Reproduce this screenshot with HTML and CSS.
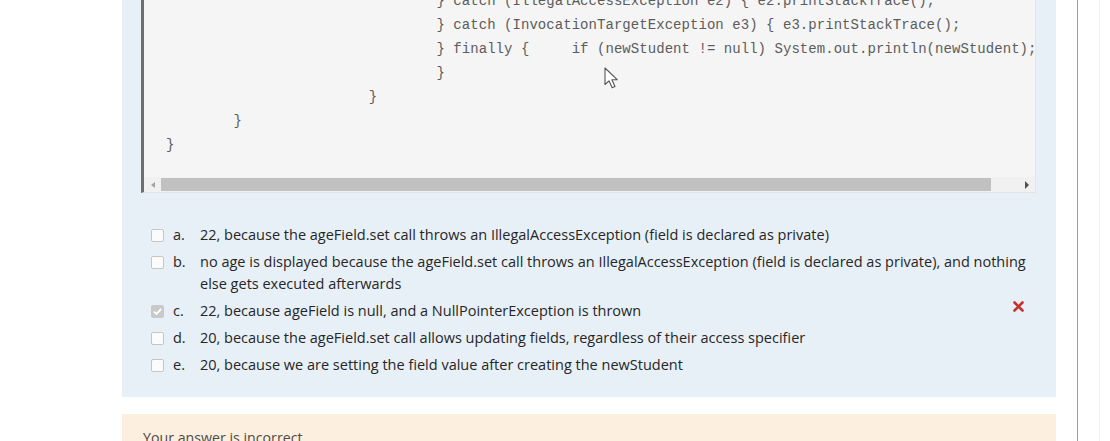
FILE: index.html
```html
<!DOCTYPE html>
<html lang="en">
<head>
<meta charset="utf-8">
<title>Question</title>
<link rel="stylesheet" href="styles.css">
</head>
<body>
<div class="page">
  <div class="question">
    <div class="formulation">
      <div class="code">
        <pre class="code-view"><div class="code-lines">                                } catch (IllegalAccessException e2) { e2.printStackTrace();
                                } catch (InvocationTargetException e3) { e3.printStackTrace();
                                } finally {     if (newStudent != null) System.out.println(newStudent); }
                                }
                        }
        }
}</div></pre>
        <div class="hscroll">
          <span class="arrow arrow-left"></span>
          <span class="thumb"></span>
          <span class="track"></span>
          <span class="arrow arrow-right"></span>
        </div>
        <svg class="cursor" width="15" height="22" viewBox="0 0 15 22">
          <path d="M1 1 L1 17.5 L5 13.8 L8.2 20.8 L11 19.5 L7.9 12.7 L13.2 12.7 Z" fill="#fff" stroke="#555" stroke-width="1.1" stroke-linejoin="round"/>
        </svg>
      </div>
      <div class="answers">
        <div class="option">
          <span class="check"></span><span class="letter">a.</span>
          <span class="text">22, because the ageField.set call throws an IllegalAccessException (field is declared as private)</span>
        </div>
        <div class="option">
          <span class="check"></span><span class="letter">b.</span>
          <span class="text">no age is displayed because the ageField.set call throws an IllegalAccessException (field is declared as private), and nothing else gets executed afterwards</span>
        </div>
        <div class="option">
          <span class="check checked"><svg width="13" height="13" viewBox="0 0 13 13"><path d="M3 6.6 L5.5 9 L10.2 3.8" fill="none" stroke="#fff" stroke-width="1.8"/></svg></span><span class="letter">c.</span>
          <span class="text">22, because ageField is null, and a NullPointerException is thrown</span>
          <svg class="wrong" width="11" height="11" viewBox="0 0 11 11"><path d="M1.5 1.5 L9.5 9.5 M9.5 1.5 L1.5 9.5" stroke="#c8312b" stroke-width="2.6" stroke-linecap="round"/></svg>
        </div>
        <div class="option">
          <span class="check"></span><span class="letter">d.</span>
          <span class="text">20, because the ageField.set call allows updating fields, regardless of their access specifier</span>
        </div>
        <div class="option">
          <span class="check"></span><span class="letter">e.</span>
          <span class="text">20, because we are setting the field value after creating the newStudent</span>
        </div>
      </div>
    </div>
    <div class="outcome">Your answer is incorrect</div>
  </div>
  <div class="side"></div>
</div>
</body>
</html>
```

FILE: styles.css
```css
html, body {
  margin: 0;
  padding: 0;
  background: #ffffff;
  height: 441px;
  overflow: hidden;
}

.page {
  display: flex;
  padding-left: 122px;
  height: 441px;
  font-family: "Open Sans", "Noto Sans", sans-serif;
}

.question {
  width: 934px;
  display: flex;
  flex-direction: column;
}

.formulation {
  background: #e8f0f7;
  padding: 0 20px 16px 19px;
}

.code {
  position: relative;
  border-left: 3px solid #6e6e6e;
  border-bottom: 1px solid #e2e2e2;
  border-right: 1px solid #e6e6e6;
  background: #f5f5f5;
}

.code-view {
  margin: 0;
  height: 177px;
  overflow: hidden;
  padding: 0 0 0 22px;
  font-family: "Liberation Mono", "DejaVu Sans Mono", monospace;
  font-size: 14px;
  letter-spacing: 0.05px;
  line-height: 24px;
  color: #5c5c5c;
  white-space: pre;
}

.code-lines {
  margin-top: -11px;
}

.hscroll {
  display: flex;
  height: 15px;
  align-items: stretch;
  background: #f1f1f1;
}

.arrow {
  width: 17px;
  display: flex;
  align-items: center;
  justify-content: center;
}

.arrow-left::before {
  content: "";
  border-right: 4px solid #a3a3a3;
  border-top: 3.5px solid transparent;
  border-bottom: 3.5px solid transparent;
}

.arrow-right::before {
  content: "";
  border-left: 4px solid #505050;
  border-top: 4px solid transparent;
  border-bottom: 4px solid transparent;
}

.thumb {
  width: 830px;
  margin: 1px 0;
  background: #c1c1c1;
}

.track {
  flex: 1;
}

.cursor {
  position: absolute;
  left: 460px;
  top: 67px;
}

.answers {
  padding: 31px 0 0 10px;
  font-size: 14.5px;
  line-height: 22px;
  color: #262626;
}

.option {
  display: flex;
  align-items: flex-start;
  margin-bottom: 5px;
}

.check {
  box-sizing: border-box;
  width: 13px;
  height: 13px;
  margin-top: 5px;
  border: 1px solid #c6c6c6;
  border-radius: 2px;
  background: #fbfbfb;
  flex-shrink: 0;
  display: flex;
}

.check.checked {
  background: #c9c9c9;
  border-color: #c9c9c9;
}

.check.checked svg {
  margin: -1px;
}

.letter {
  width: 27px;
  margin-left: 9px;
  flex-shrink: 0;
}

.text {
  flex: 1;
}

.wrong {
  flex-shrink: 0;
  margin: 1px 12px 0 0;
}

.outcome {
  margin-top: 17px;
  flex: 1;
  background: #fcefdf;
  padding: 14px 21px;
  font-size: 14.2px;
  color: #4e4a44;
}

.side {
  margin-left: 21px;
  width: 21px;
  border-left: 1px solid #9c9c9c;
  border-right: 1px solid #efefef;
  height: 441px;
}
```
